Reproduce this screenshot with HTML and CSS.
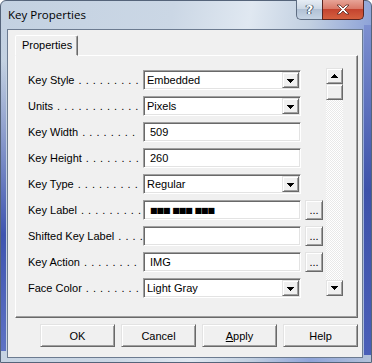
FILE: index.html
```html
<!DOCTYPE html>
<html lang="en">
<head>
    <meta charset="UTF-8">
    <title>Key Properties</title>
    <link rel="stylesheet" href="styles.css">
</head>
<body>
    <div class="window">
        <!-- 标题栏 -->
        <div class="titlebar">
            <span class="title">Key Properties</span>
            <div class="caption">
                <span class="cap help">?</span>
                <span class="cap close">
                    <svg width="14" height="11" viewBox="0 0 14 11"><path d="M1 1h3l3 3 3-3h3l-4.5 4.5L13 10h-3L7 7l-3 3H1l4.5-4.5z" fill="#fff" stroke="#5a2a22" stroke-width="0.8"/></svg>
                </span>
            </div>
        </div>
        <div class="client">
            <div class="tabs"><span class="tab">Properties</span></div>
            <div class="panel">
                <div class="rows">
                    <span class="label">Key Style<span class="dots"> . . . . . . . . .</span></span>
                    <span class="field"><span class="val">Embedded</span><span class="drop"><svg width="7" height="4"><path d="M0 0h7v1h-1v1h-1v1h-1v1h-1v-1h-1v-1h-1v-1h-1z"/></svg></span></span>
                    <span></span>

                    <span class="label">Units<span class="dots"> . . . . . . . . . . . . .</span></span>
                    <span class="field"><span class="val">Pixels</span><span class="drop"><svg width="7" height="4"><path d="M0 0h7v1h-1v1h-1v1h-1v1h-1v-1h-1v-1h-1v-1h-1z"/></svg></span></span>
                    <span></span>

                    <span class="label">Key Width<span class="dots"> . . . . . . . .</span></span>
                    <span class="field"><span class="val text">509</span></span>
                    <span></span>

                    <span class="label">Key Height<span class="dots"> . . . . . . . .</span></span>
                    <span class="field"><span class="val text">260</span></span>
                    <span></span>

                    <span class="label">Key Type<span class="dots"> . . . . . . . . .</span></span>
                    <span class="field"><span class="val">Regular</span><span class="drop"><svg width="7" height="4"><path d="M0 0h7v1h-1v1h-1v1h-1v1h-1v-1h-1v-1h-1v-1h-1z"/></svg></span></span>
                    <span></span>

                    <span class="label">Key Label<span class="dots"> . . . . . . . . .</span></span>
                    <span class="field"><span class="val text glyphs">■■■ ■■■ ■■■</span></span>
                    <span class="more">...</span>

                    <span class="label">Shifted Key Label<span class="dots"> . . . .</span></span>
                    <span class="field"><span class="val text"></span></span>
                    <span class="more">...</span>

                    <span class="label">Key Action<span class="dots"> . . . . . . . .</span></span>
                    <span class="field"><span class="val text">IMG</span></span>
                    <span class="more">...</span>

                    <span class="label">Face Color<span class="dots"> . . . . . . . .</span></span>
                    <span class="field"><span class="val">Light Gray</span><span class="drop"><svg width="7" height="4"><path d="M0 0h7v1h-1v1h-1v1h-1v1h-1v-1h-1v-1h-1v-1h-1z"/></svg></span></span>
                    <span></span>
                </div>
                <!-- 滚动条 -->
                <div class="scrollbar">
                    <span class="sbtn"><svg width="7" height="4"><path d="M3 0h1v1h1v1h1v1h1v1h-7v-1h1v-1h1v-1h1z"/></svg></span>
                    <span class="thumb"></span>
                    <span class="track"></span>
                    <span class="sbtn"><svg width="7" height="4"><path d="M0 0h7v1h-1v1h-1v1h-1v1h-1v-1h-1v-1h-1v-1h-1z"/></svg></span>
                </div>
            </div>
            <div class="buttons">
                <span class="btn">OK</span>
                <span class="btn">Cancel</span>
                <span class="btn"><u>A</u>pply</span>
                <span class="btn">Help</span>
            </div>
        </div>
    </div>
</body>
</html>
```

FILE: styles.css
```css
* {
    margin: 0;
    padding: 0;
    box-sizing: border-box;
}
body {
    background: #fff;
    font: 11px "Liberation Sans", Arial, sans-serif;
    color: #000;
}
.window {
    width: 372px;
    height: 363px;
    display: flex;
    flex-direction: column;
    padding: 0 8px 4px 6px;
    border: 1px solid #55647a;
    border-radius: 6px 6px 0 0;
    background:
        linear-gradient(180deg, rgba(62, 84, 176, 0) 0, #3e54b0 60%, #5d72c4 100%) left 0 top 60px / 5px 290px no-repeat,
        linear-gradient(180deg, #7d90d0 0, #3d52aa 50%, #4a5fb8 100%) right 0 top 24px / 7px 330px no-repeat,
        linear-gradient(100deg, #c3d1e1 0, #cbd7e5 40%, #e0e8f1 58%, #c2d0e1 72%, #8fa4d8 86%, #b3c2da 100%);
}
.titlebar {
    height: 28px;
    display: flex;
    align-items: flex-start;
    justify-content: space-between;
}
.title {
    padding: 6px 0 0 1px;
    line-height: 16px;
    font: 11.5px "Open Sans", "Liberation Sans", sans-serif;
}
.caption {
    display: flex;
    margin: -1px -1px 0 0;
}
.cap {
    height: 20px;
    display: flex;
    align-items: center;
    justify-content: center;
}
.help {
    width: 26px;
    border: 1px solid #5e6d82;
    border-top: none;
    border-right: none;
    border-radius: 0 0 0 5px;
    background: linear-gradient(180deg, #e6edf5 0, #cdd8e5 45%, #b1c1d5 50%, #c6d4e4 100%);
    color: #fff;
    font: bold 13px "DejaVu Sans", sans-serif;
    text-shadow: 0 0 1px #2c3a4e, 1px 0 0 #45556c, -1px 0 0 #45556c;
}
.close {
    width: 42px;
    border: 1px solid #5a2520;
    border-top: none;
    border-radius: 0 0 5px 0;
    background: linear-gradient(180deg, #e7a497 0, #d97a69 45%, #c4442f 50%, #d4603f 100%);
}
.client {
    flex: 1;
    display: flex;
    flex-direction: column;
    border: 1px solid #6c7b90;
    background: #f0f0f0;
}
.tabs {
    display: flex;
    margin: 5px 0 0 7px;
}
.tab {
    height: 21px;
    line-height: 19px;
    padding: 0 5px 0 6px;
    border: 1px solid;
    border-color: #fff #696969 transparent #fff;
    box-shadow: inset -1px 0 #a0a0a0;
    border-radius: 2px 2px 0 0;
    background: #f0f0f0;
    position: relative;
    z-index: 1;
}
.panel {
    display: flex;
    align-items: flex-start;
    margin: -1px 0 0 7px;
    width: 343px;
    height: 263px;
    padding-left: 12px;
    border: 1px solid;
    border-color: #fff #696969 #696969 #fff;
    box-shadow: inset -1px -1px #a0a0a0;
}
.rows {
    display: grid;
    grid-template-columns: 115px 158px 22px;
    grid-auto-rows: 20px;
    row-gap: 6px;
    margin-top: 14px;
}
.label {
    padding-top: 4px;
    white-space: nowrap;
}
.dots {
    word-spacing: 1px;
}
.field {
    display: flex;
    align-items: center;
    padding: 1px;
    border: 1px solid;
    border-color: #a0a0a0 #fff #fff #a0a0a0;
    box-shadow: inset 1px 1px #696969, inset -1px -1px #e3e3e3;
    background: #fff;
}
.val {
    padding-left: 2px;
    white-space: nowrap;
}
.val.text {
    padding-left: 5px;
}
.glyphs {
    font: 8px "DejaVu Sans", sans-serif;
    letter-spacing: -1px;
    word-spacing: 1px;
}
.drop,
.sbtn,
.thumb,
.more,
.btn {
    display: flex;
    align-items: center;
    justify-content: center;
    background: #f0f0f0;
    border: 1px solid;
    border-color: #e3e3e3 #696969 #696969 #e3e3e3;
    box-shadow: inset 1px 1px #fff, inset -1px -1px #a0a0a0;
}
.drop {
    margin-left: auto;
    width: 17px;
    height: 16px;
    padding-top: 1px;
}
.more {
    margin-left: 4px;
    width: 18px;
    height: 20px;
    align-items: flex-end;
    padding-bottom: 4px;
    line-height: 9px;
}
.scrollbar {
    display: flex;
    flex-direction: column;
    margin: 12px 0 0 3px;
    width: 17px;
    height: 228px;
}
.sbtn,
.thumb {
    height: 16px;
    flex-shrink: 0;
}
.track {
    flex: 1;
    background: repeating-conic-gradient(#fff 0 25%, #e9e9e9 0 50%) 0 0 / 2px 2px;
}
.buttons {
    display: flex;
    gap: 6px;
    margin: 6px 0 0 32px;
}
.btn {
    width: 75px;
    height: 23px;
}
.btn u {
    text-decoration: underline;
}
```
